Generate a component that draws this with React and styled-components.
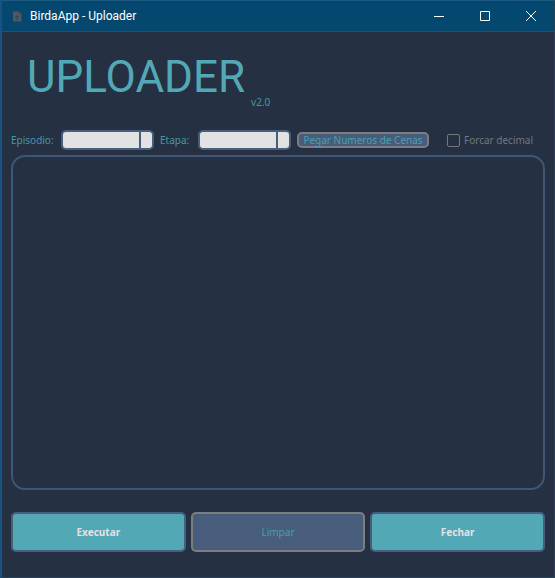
import React from "react";
import styled, { createGlobalStyle } from "styled-components";

const GlobalStyle = createGlobalStyle`
  * { box-sizing: border-box; }
  body { margin: 0; background: #253142; }
`;

const Window = styled.div`
  display: flex;
  flex-direction: column;
  min-height: 100vh;
  border: 1px solid #2a4259;
  border-top-color: #1c5880;
  border-left: 2px solid #175380;
  background: #253142;
  color: #4796a3;
  font: 10px/16px "Noto Sans", sans-serif;
`;

const TitleBar = styled.header`
  display: flex;
  align-items: center;
  height: 31px;
  padding-left: 10px;
  background: #05486f;
  border-bottom: 1px solid #2d4c65;
  color: #fff;
`;

const FileIcon = styled.svg`
  width: 10px;
  height: 11px;
  margin-right: 8px;
`;

const Caption = styled.span`
  flex: 1;
  font-family: Roboto, sans-serif;
  font-size: 12px;
`;

const CaptionButton = styled.button`
  display: flex;
  align-items: center;
  justify-content: center;
  width: 46px;
  height: 28px;
  padding: 0;
  border: 0;
  background: transparent;
  color: #fff;
`;

const Content = styled.main`
  flex: 1;
  display: flex;
  flex-direction: column;
  padding: 12px 9px 25px;
`;

const Heading = styled.div`
  display: flex;
  align-items: flex-end;
  gap: 6px;
  height: 66px;
  padding-left: 16px;
`;

const Title = styled.h1`
  margin: 0;
  color: #53a8b6;
  font-family: Roboto, sans-serif;
  font-size: 44px;
  font-weight: 400;
  line-height: 66px;
`;

const Version = styled.span`
  font-size: 10px;
`;

const Controls = styled.div`
  display: flex;
  align-items: center;
  height: 20px;
  margin-top: 20px;
`;

const Label = styled.label`
  width: ${(p) => p.$width}px;
  white-space: nowrap;
`;

const Picker = styled.select`
  appearance: none;
  width: 93px;
  height: 20px;
  margin-right: 6px;
  padding: 0 16px 0 4px;
  border: 2px solid #465f7e;
  border-radius: 5px;
  background: linear-gradient(#465f7e, #465f7e) right 11px top / 2px 100% no-repeat #e2e2e2;
  font: inherit;
`;

const Button = styled.button`
  padding: 0;
  border: 2px solid ${(p) => (p.$primary ? "#465f7e" : "#7b7d80")};
  border-radius: 5px;
  background: ${(p) => (p.$primary ? "#53a8b6" : "#475d7b")};
  color: ${(p) => (p.$primary ? "#e2e2e2" : "#4b9dad")};
  font: inherit;
  font-weight: ${(p) => (p.$primary ? 700 : 400)};
  white-space: nowrap;
`;

const SmallButton = styled(Button)`
  width: 132px;
  height: 16px;
  line-height: 12px;
`;

const CheckLabel = styled.label`
  display: flex;
  align-items: center;
  gap: 4px;
  margin-left: 18px;
  color: #74777b;
  white-space: nowrap;
`;

const CheckBox = styled.input`
  appearance: none;
  width: 13px;
  height: 13px;
  margin: 0;
  border: 1px solid #74777b;
  border-radius: 2px;
`;

const Output = styled.textarea`
  flex: 1;
  width: 100%;
  margin: 5px 0 22px;
  padding: 10px;
  border: 2px solid #3f5775;
  border-radius: 14px;
  background: transparent;
  color: inherit;
  font: inherit;
  resize: none;
`;

const Actions = styled.div`
  display: grid;
  grid-template-columns: repeat(3, 1fr);
  grid-auto-rows: 40px;
  gap: 5px;
`;

export default function App() {
  return (
    <>
      <GlobalStyle />
      <Window>
        <TitleBar>
          <FileIcon viewBox="0 0 10 11" aria-hidden="true">
            <path d="M1 0.5h5.5L9.5 3v7.5h-8.5z" fill="#57575a" />
            <path d="M6.5 0.5V3h3" fill="#365369" />
            <path d="M5 9V5M3 6.5 5 4.5l2 2" fill="none" stroke="#174766" />
          </FileIcon>
          <Caption>BirdaApp - Uploader</Caption>
          <CaptionButton aria-label="Minimizar">
            <svg width="10" height="10" aria-hidden="true">
              <path d="M0 5.5h10" stroke="currentColor" />
            </svg>
          </CaptionButton>
          <CaptionButton aria-label="Maximizar">
            <svg width="10" height="10" aria-hidden="true">
              <path d="M.5.5h9v9h-9z" fill="none" stroke="currentColor" />
            </svg>
          </CaptionButton>
          <CaptionButton aria-label="Fechar janela">
            <svg width="10" height="10" aria-hidden="true">
              <path d="m0 0 10 10M10 0 0 10" stroke="currentColor" />
            </svg>
          </CaptionButton>
        </TitleBar>
        <Content>
          <Heading>
            <Title>UPLOADER</Title>
            <Version>v2.0</Version>
          </Heading>
          <Controls>
            <Label htmlFor="episodio" $width={50}>Episodio:</Label>
            <Picker id="episodio" />
            <Label htmlFor="etapa" $width={38}>Etapa:</Label>
            <Picker id="etapa" />
            <SmallButton>Pegar Numeros de Cenas</SmallButton>
            <CheckLabel>
              <CheckBox type="checkbox" />
              Forcar decimal
            </CheckLabel>
          </Controls>
          <Output aria-label="Resultado" />
          <Actions>
            <Button $primary>Executar</Button>
            <Button>Limpar</Button>
            <Button $primary>Fechar</Button>
          </Actions>
        </Content>
      </Window>
    </>
  );
}
